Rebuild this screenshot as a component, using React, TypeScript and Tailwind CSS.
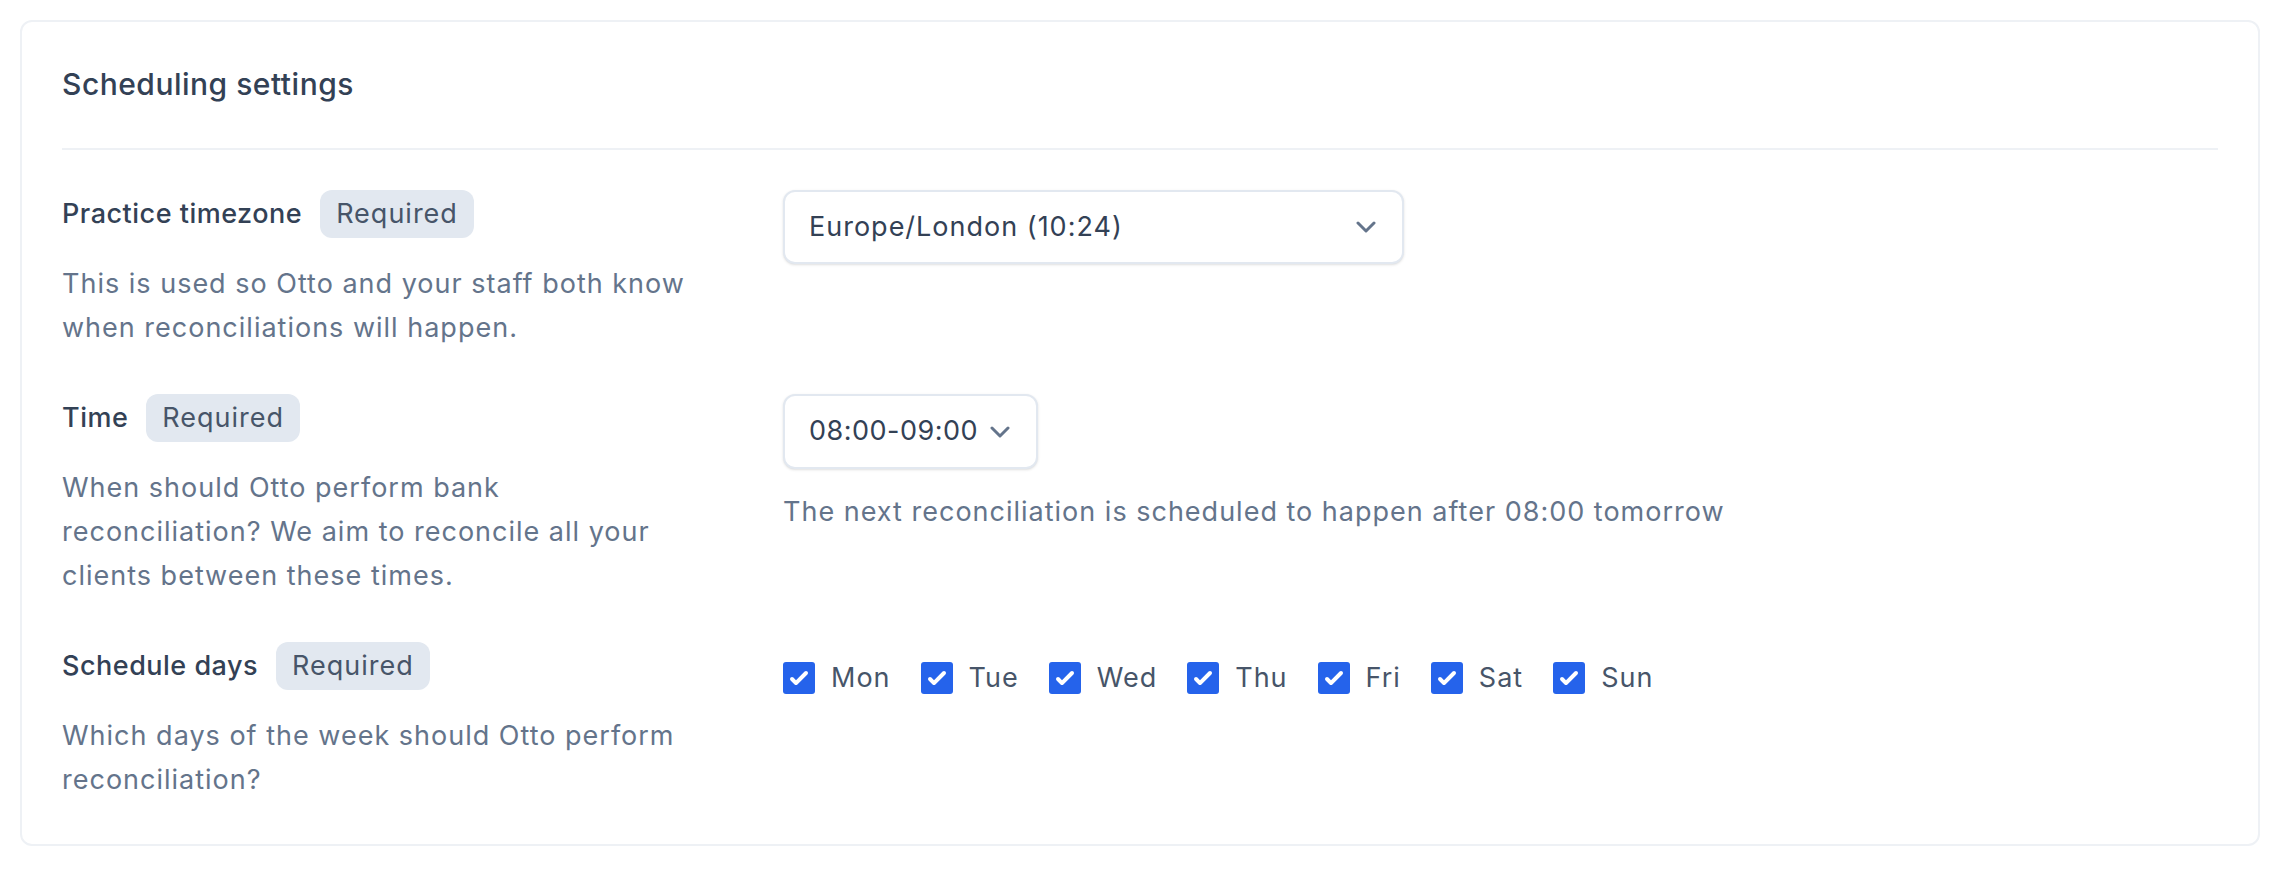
const DAYS = ['Mon', 'Tue', 'Wed', 'Thu', 'Fri', 'Sat', 'Sun']

function Chevron() {
  return (
    <svg width="20" height="12" viewBox="0 0 20 12" fill="none" className="shrink-0">
      <path d="M2 2l8 8 8-8" stroke="#64748b" strokeWidth="3" strokeLinecap="round" strokeLinejoin="round" />
    </svg>
  )
}

function Badge() {
  return (
    <span className="inline-flex h-12 items-center rounded-xl bg-[#e2e8f0] px-4 text-[27px] tracking-[1px] text-[#475569]">
      Required
    </span>
  )
}

function FieldLabel({ label, description }: { label: string; description: string }) {
  return (
    <div>
      <div className="flex items-center gap-[18px]">
        <span className="text-[27px] font-medium tracking-[0.5px] text-[#334155]">{label}</span>
        <Badge />
      </div>
      <p className="mt-6 max-w-[632px] text-[27px] leading-[44px] tracking-[1px] text-[#64748b]">{description}</p>
    </div>
  )
}

function Checkbox({ label }: { label: string }) {
  return (
    <label className="flex items-center gap-4">
      <span className="flex h-8 w-8 items-center justify-center rounded-[3px] bg-[#2563eb]">
        <svg viewBox="0 0 16 16" className="h-8 w-8" fill="white">
          <path d="M12.207 4.793a1 1 0 010 1.414l-5 5a1 1 0 01-1.414 0l-2-2a1 1 0 011.414-1.414L6.5 9.086l4.293-4.293a1 1 0 011.414 0z" />
        </svg>
      </span>
      <span className="text-[27px] leading-[44px] tracking-[1px] text-[#475569]">{label}</span>
    </label>
  )
}

export default function App() {
  return (
    <div className="min-h-screen bg-white py-5 pl-5 pr-[22px] font-['Inter',sans-serif]">
      <div className="rounded-xl border-2 border-[#eef1f5] px-[40px] pt-[40px] pb-[42px]">
        {/* Header */}
        <div className="border-b-2 border-[#eef1f5] pb-[42px]">
          <h2 className="text-[30px] font-medium leading-[44px] tracking-[0.5px] text-[#334155]">Scheduling settings</h2>
        </div>

        <div className="mt-10 flex flex-col gap-[44px]">
          {/* Timezone */}
          <div className="grid grid-cols-[721px_1fr]">
            <FieldLabel
              label="Practice timezone"
              description="This is used so Otto and your staff both know when reconciliations will happen."
            />
            <div>
              <button className="flex h-[74px] w-[621px] items-center justify-between rounded-xl border-2 border-[#e2e8f0] bg-white pl-6 pr-[26px] text-[27px] tracking-[1px] text-[#334155] shadow-sm">
                <span>Europe/London (10:24)</span>
                <Chevron />
              </button>
            </div>
          </div>

          {/* Time */}
          <div className="grid grid-cols-[721px_1fr]">
            <FieldLabel
              label="Time"
              description="When should Otto perform bank reconciliation? We aim to reconcile all your clients between these times."
            />
            <div>
              <button className="flex h-[75px] items-center gap-3 rounded-xl border-2 border-[#e2e8f0] bg-white pl-6 pr-[26px] text-[27px] tracking-[0.5px] text-[#334155] shadow-sm">
                <span>08:00-09:00</span>
                <Chevron />
              </button>
              <p className="mt-[21px] text-[27px] leading-[44px] tracking-[1px] text-[#64748b]">
                The next reconciliation is scheduled to happen after 08:00 tomorrow
              </p>
            </div>
          </div>

          {/* Days */}
          <div className="grid grid-cols-[721px_1fr]">
            <FieldLabel
              label="Schedule days"
              description="Which days of the week should Otto perform reconciliation?"
            />
            <div className="mt-[14px] flex items-start gap-[30px]">
              {DAYS.map((d) => (
                <Checkbox key={d} label={d} />
              ))}
            </div>
          </div>
        </div>
      </div>
    </div>
  )
}
